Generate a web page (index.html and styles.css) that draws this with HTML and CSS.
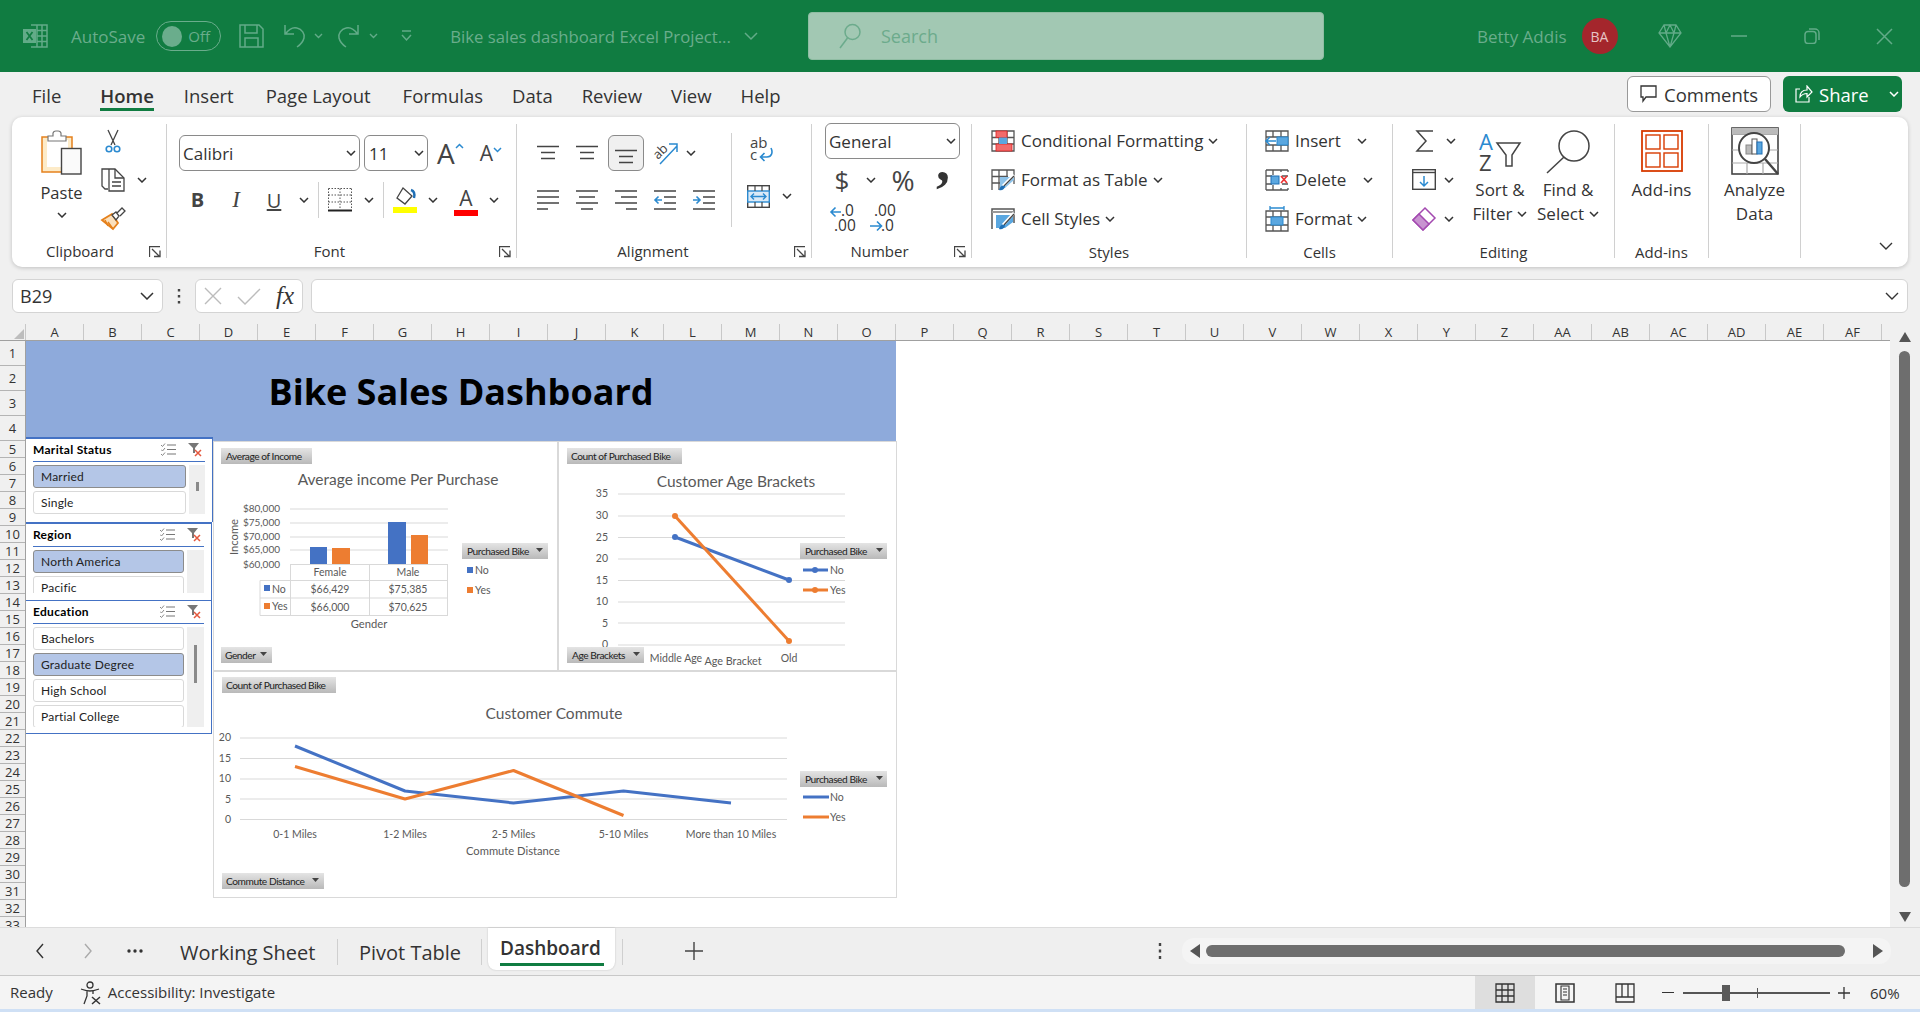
FILE: index.html

```html
<!DOCTYPE html>
<html lang="en">
<head>
    <meta charset="UTF-8">
    <title>Bike sales dashboard Excel Project</title>
    <link rel="stylesheet" href="styles.css">
</head>
<body>
    <svg class="defs" width="0" height="0">
        <defs>
            <linearGradient id="pvt" x1="0" y1="0" x2="0" y2="1">
                <stop offset="0" stop-color="#e4e4e4"/>
                <stop offset="1" stop-color="#b9b9b9"/>
            </linearGradient>
            <symbol id="chev" viewBox="0 0 10 6"><path d="M1 1l4 4 4-4" fill="none" stroke="#333" stroke-width="1.5"/></symbol>
            <symbol id="launcher" viewBox="0 0 12 12"><path d="M.5 11V.5H11M3 3l7 7M5 10.5h6v-6" fill="none" stroke="#444" stroke-width="1.3"/></symbol>
            <symbol id="al-top" viewBox="0 0 22 16"><path d="M0 1.5h22M4 7.5h14M4 13.500h14" fill="none" stroke="#444" stroke-width="1.500"/></symbol>
            <symbol id="al-left" viewBox="0 0 22 20"><path d="M0 1h22M0 7h22M0 13h22M0 19h11" fill="none" stroke="#444" stroke-width="1.500"/></symbol>
            <symbol id="al-center" viewBox="0 0 22 20"><path d="M0 1h22M3 7h16M0 13h22M5 19h12" fill="none" stroke="#444" stroke-width="1.500"/></symbol>
            <symbol id="al-right" viewBox="0 0 22 20"><path d="M0 1h22M6 7h16M0 13h22M11 19h11" fill="none" stroke="#444" stroke-width="1.500"/></symbol>
        </defs>
    </svg>

    <header class="titlebar">
        <div class="tb-left">
            <svg class="xl-logo" width="25" height="24" viewBox="0 0 25 24">
                <path d="M8 1h16v22H8M14 1v22M19 1v22M14 6.500h10M14 12h10M14 17.500h10" fill="none" stroke="#62ab88" stroke-width="1.500"/>
                <rect x="0" y="5" width="13" height="14" fill="#62ab88"/>
                <path d="M3.500 8l6 8M9.500 8l-6 8" stroke="#107c41" stroke-width="1.700"/>
            </svg>
            <span class="tb-text autosave">AutoSave</span>
            <span class="toggle"><i class="knob"></i>Off</span>
            <svg class="tb-save" width="25" height="24" viewBox="0 0 25 24"><path d="M1 1h19l4 4v18H1zM6 1v8h12V1M6 23v-9h13v9" fill="none" stroke="#62ab88" stroke-width="1.500"/></svg>
            <svg class="tb-undo" width="23" height="24" viewBox="0 0 23 24"><path d="M1 1v9h9M1.500 10C5 5 9 3 13 4c5 1 8 6 7 10s-4 7-7 9" fill="none" stroke="#62ab88" stroke-width="1.500"/></svg>
            <svg class="tb-chev" width="9" height="6"><path d="M1 1l3.500 3.500L8 1" fill="none" stroke="#62ab88" stroke-width="1.400"/></svg>
            <svg class="tb-redo" width="23" height="24" viewBox="0 0 23 24"><path d="M22 1v9h-9M21.500 10C18 5 14 3 10 4 5 5 2 10 3 14s4 7 7 9" fill="none" stroke="#62ab88" stroke-width="1.500"/></svg>
            <svg class="tb-chev tb-chev2" width="9" height="6"><path d="M1 1l3.500 3.500L8 1" fill="none" stroke="#62ab88" stroke-width="1.400"/></svg>
            <svg class="tb-custom" width="11" height="12" viewBox="0 0 11 12"><path d="M1 1h9M1 5l4.500 5L10 5" fill="none" stroke="#62ab88" stroke-width="1.500"/></svg>
            <span class="tb-text doc-name">Bike sales dashboard Excel Project...</span>
            <svg class="tb-docchev" width="14" height="9" viewBox="0 0 14 9"><path d="M1 1l6 6 6-6" fill="none" stroke="#62ab88" stroke-width="1.500"/></svg>
        </div>
        <div class="search">
            <svg width="24" height="26" viewBox="0 0 24 26"><circle cx="14.500" cy="9" r="7.500" fill="none" stroke="#6cab8c" stroke-width="1.500"/><path d="M9.500 15L2 25" stroke="#6cab8c" stroke-width="1.500"/></svg>
            <span class="search-text">Search</span>
        </div>
        <div class="tb-right">
            <span class="tb-text">Betty Addis</span>
            <span class="avatar">BA</span>
            <svg class="tb-gem" width="24" height="24" viewBox="0 0 24 24"><path d="M6 1h12l5 8-11 14L1 9zM1 9h22M8 9l4 14 4-14M6 1l2 8 4-8 4 8 2-8" fill="none" stroke="#62ab88" stroke-width="1.300"/></svg>
            <svg class="tb-min" width="16" height="2"><path d="M0 1h16" stroke="#62ab88" stroke-width="1.500"/></svg>
            <svg class="tb-rest" width="16" height="16" viewBox="0 0 16 16"><path d="M5 1h6a4 4 0 014 4v7" fill="none" stroke="#62ab88" stroke-width="1.500"/><rect x="1" y="3.500" width="11" height="12" rx="3" fill="none" stroke="#62ab88" stroke-width="1.500"/></svg>
            <svg class="tb-close" width="17" height="17" viewBox="0 0 17 17"><path d="M1 1l15 15M16 1L1 16" stroke="#62ab88" stroke-width="1.500"/></svg>
        </div>
    </header>

    <nav class="menu">
        <ul class="menu-tabs">
            <li class="first">File</li>
            <li class="active">Home</li>
            <li class="wide">Insert</li>
            <li class="wide">Page Layout</li>
            <li>Formulas</li>
            <li>Data</li>
            <li>Review</li>
            <li>View</li>
            <li>Help</li>
        </ul>
        <button class="comments">
            <svg width="17" height="18" viewBox="0 0 17 18"><path d="M1 1h15v11H6l-3 4v-4H1z" fill="none" stroke="#333" stroke-width="1.300"/></svg>
            Comments
        </button>
        <button class="share">
            <svg width="18" height="18" viewBox="0 0 18 18"><path d="M5 4H1v13h13v-5M5 12c0-5 3-7 7-7V1l5 6-5 5V8.500c-3 0-5 1-7 3.500z" fill="none" stroke="#fff" stroke-width="1.200"/></svg>
            Share
            <svg class="share-chev" width="10" height="6"><path d="M1 1l4 4 4-4" fill="none" stroke="#fff" stroke-width="1.500"/></svg>
        </button>
    </nav>

    <section class="ribbon">
        <div class="group g-clip">
            <div class="group-body clip-body">
                <div class="paste">
                    <svg width="41" height="45" viewBox="0 0 41 45">
                        <path d="M1 7h30v35H1z" fill="#fdebc8" stroke="#e5811c" stroke-width="1.500"/>
                        <path d="M6 10h21v27H6z" fill="#fff"/>
                        <path d="M7 11V6h5V3a3 3 0 013-2h2a3 3 0 013 2v3h5v5z" fill="#fff" stroke="#777" stroke-width="1.200"/>
                        <rect x="20.500" y="18.500" width="19.500" height="25.500" fill="#fafafa" stroke="#444" stroke-width="1.400"/>
                    </svg>
                    <span class="paste-label">Paste</span>
                    <svg class="chev" width="10" height="6"><use href="#chev"/></svg>
                </div>
                <div class="stack">
                    <div class="stack-row">
                        <svg width="16" height="24" viewBox="0 0 16 24"><path d="M3 1l7 15M13 1L6 16" stroke="#444" stroke-width="1.300" fill="none"/><circle cx="4" cy="20" r="2.800" fill="none" stroke="#2b8ad0" stroke-width="1.600"/><circle cx="12" cy="20" r="2.800" fill="none" stroke="#2b8ad0" stroke-width="1.600"/></svg>
                    </div>
                    <div class="stack-row">
                        <svg width="24" height="24" viewBox="0 0 24 24"><path d="M8 1H1v17l3 3h3M8 1h6l9 9v13H8z" fill="#fff" stroke="#444" stroke-width="1.300"/><path d="M14 1v9h9M11 14h9M11 18h9" fill="none" stroke="#444" stroke-width="1.300"/></svg>
                        <svg class="chev-copy" width="10" height="6"><use href="#chev"/></svg>
                    </div>
                    <div class="stack-row">
                        <svg width="25" height="23" viewBox="0 0 25 23"><path d="M1 13l10-6 6 9-5 6z" fill="#fbe0bc" stroke="#e5811c" stroke-width="1.800"/><path d="M7 15l5 7M4 13l3 6" stroke="#e5811c" stroke-width="1.500"/><path d="M11 8l4-3 3 4-3 4zM16 6l5-5 3 3-5 5" fill="#fff" stroke="#444" stroke-width="1.300"/></svg>
                    </div>
                </div>
            </div>
            <div class="group-label">Clipboard<svg class="launcher" width="12" height="12"><use href="#launcher"/></svg></div>
        </div>

        <div class="group g-font">
            <div class="group-body">
                <div class="r-row r1">
                    <span class="select sel-font">Calibri<svg width="10" height="6"><use href="#chev"/></svg></span>
                    <span class="select sel-size">11<svg width="10" height="6"><use href="#chev"/></svg></span>
                    <span class="grow-a">A<svg width="9" height="6"><path d="M1 5l3.500-3.500L8 5" fill="none" stroke="#2b8ad0" stroke-width="1.500"/></svg></span>
                    <span class="shrink-a">A<svg width="9" height="6"><path d="M1 1l3.500 3.500L8 1" fill="none" stroke="#2b8ad0" stroke-width="1.500"/></svg></span>
                </div>
                <div class="r-row r2">
                    <span class="cell w37 t-b">B</span>
                    <span class="cell w40 t-i">I</span>
                    <span class="cell w36 t-u">U</span>
                    <span class="cell w23"><svg width="10" height="6"><use href="#chev"/></svg></span>
                    <i class="vsep"></i>
                    <span class="cell w35">
                        <svg width="24" height="24" viewBox="0 0 24 24"><path d="M.5.500h23M.5.500v20M23.500.500v20M.5 7h23M.5 14h23M12 .5v20" fill="none" stroke="#555" stroke-width="1" stroke-dasharray="1.500 1.500"/><path d="M0 22.500h24" stroke="#222" stroke-width="2"/></svg>
                    </span>
                    <span class="cell w23"><svg width="10" height="6"><use href="#chev"/></svg></span>
                    <i class="vsep"></i>
                    <span class="cell w36">
                        <svg width="24" height="26" viewBox="0 0 24 26"><path d="M10 1l9 8-7 8-8-6z" fill="#fff" stroke="#444" stroke-width="1.300"/><path d="M18 3c3 1 4 4 3 8" fill="none" stroke="#1f6fb5" stroke-width="2.400"/><rect y="20" width="24" height="6" fill="#ffff00"/></svg>
                    </span>
                    <span class="cell w20"><svg width="10" height="6"><use href="#chev"/></svg></span>
                    <span class="cell w46 color-a">A<i class="color-bar"></i></span>
                    <span class="cell w10"><svg width="10" height="6"><use href="#chev"/></svg></span>
                </div>
            </div>
            <div class="group-label">Font<svg class="launcher" width="12" height="12"><use href="#launcher"/></svg></div>
        </div>

        <div class="group g-align">
            <div class="group-body align-body">
                <div class="align-left">
                    <div class="r-row r1">
                        <span class="cell w39"><svg width="22" height="16"><use href="#al-top"/></svg></span>
                        <span class="cell w39"><svg width="22" height="16"><use href="#al-top"/></svg></span>
                        <span class="cell w39"><span class="pressed"><svg width="22" height="16"><use href="#al-top"/></svg></span></span>
                        <span class="cell w39">
                            <svg width="26" height="24" viewBox="0 0 26 24">
                                <text class="ic-small" transform="translate(6 19) rotate(-45)" x="0" y="0">ab</text>
                                <path d="M8 23L25 5M17 3h8v8" fill="none" stroke="#2b8ad0" stroke-width="1.500"/>
                            </svg>
                        </span>
                        <span class="cell w14"><svg width="10" height="6"><use href="#chev"/></svg></span>
                    </div>
                    <div class="r-row r2">
                        <span class="cell w39"><svg width="22" height="20"><use href="#al-left"/></svg></span>
                        <span class="cell w39"><svg width="22" height="20"><use href="#al-center"/></svg></span>
                        <span class="cell w39"><svg width="22" height="20"><use href="#al-right"/></svg></span>
                        <span class="cell w39">
                            <svg width="22" height="20" viewBox="0 0 22 20"><path d="M0 1h22M10 7h12M10 13h12M0 19h22" fill="none" stroke="#444" stroke-width="1.500"/><path d="M8 10H1M4.500 6.500L1 10l3.500 3.500" fill="none" stroke="#2b8ad0" stroke-width="1.600"/></svg>
                        </span>
                        <span class="cell w39">
                            <svg width="22" height="20" viewBox="0 0 22 20"><path d="M0 1h22M10 7h12M10 13h12M0 19h22" fill="none" stroke="#444" stroke-width="1.500"/><path d="M0 10h7M3.500 6.500L7 10l-3.500 3.500" fill="none" stroke="#2b8ad0" stroke-width="1.600"/></svg>
                        </span>
                    </div>
                </div>
                <i class="vsep tall-sep"></i>
                <div class="align-right">
                    <svg class="wrap-ic" width="24" height="26" viewBox="0 0 24 26">
                        <text class="ic-text" x="0" y="11">ab</text>
                        <text class="ic-text" x="0" y="23">c</text>
                        <path d="M21 11c2 4 1 9-4 9h-6M14.500 16l-4 4 4 4" fill="none" stroke="#2b8ad0" stroke-width="1.600"/>
                    </svg>
                    <div class="merge-row">
                        <svg width="23" height="23" viewBox="0 0 23 23"><rect x=".7" y=".7" width="21.600" height="21.600" fill="#fff" stroke="#444" stroke-width="1.400"/><rect x=".7" y="6" width="21.600" height="11" fill="#dbeaf7" stroke="#2b8ad0" stroke-width="1.400"/><path d="M8 .7V6M15 .7V6M8 17v5M15 17v5" stroke="#444" stroke-width="1.200"/><path d="M4 11.500h15M7 8.500l-3 3 3 3M16 8.500l3 3-3 3" fill="none" stroke="#2b8ad0" stroke-width="1.400"/></svg>
                        <span class="cell w34"><svg width="10" height="6"><use href="#chev"/></svg></span>
                    </div>
                </div>
            </div>
            <div class="group-label lbl-align">Alignment<svg class="launcher" width="12" height="12"><use href="#launcher"/></svg></div>
        </div>

        <div class="group g-num">
            <div class="group-body num-body">
                <span class="select sel-num">General<svg width="10" height="6"><use href="#chev"/></svg></span>
                <div class="r-row num-row">
                    <span class="cell w24 t-sym">$</span>
                    <span class="cell w34"><svg width="10" height="6"><use href="#chev"/></svg></span>
                    <span class="cell w30 t-pct">%</span>
                    <span class="cell w10"></span>
                    <span class="cell w30 t-comma">,</span>
                </div>
                <div class="r-row dec-row">
                    <svg width="26" height="28" viewBox="0 0 26 28">
                        <text class="ic-num" x="11" y="12">.0</text>
                        <text class="ic-num" x="4" y="27">.00</text>
                        <path d="M11 8H1M5.500 3.500L1 8l4.500 4.500" fill="none" stroke="#2b8ad0" stroke-width="1.600"/>
                    </svg>
                    <svg class="dec2" width="26" height="28" viewBox="0 0 26 28">
                        <text class="ic-num" x="4" y="12">.00</text>
                        <text class="ic-num" x="11" y="27">.0</text>
                        <path d="M0 22h11M7 17.500l4.500 4.500L7 26.500" fill="none" stroke="#2b8ad0" stroke-width="1.600"/>
                    </svg>
                </div>
            </div>
            <div class="group-label lbl-num">Number<svg class="launcher" width="12" height="12"><use href="#launcher"/></svg></div>
        </div>

        <div class="group g-styles">
            <div class="group-body">
                <div class="stack list">
                    <div class="stack-row">
                        <svg width="24" height="22" viewBox="0 0 24 22"><path d="M1 1h22v20H1zM1 7.500h22M1 14h22M8 1v20M16 1v20" fill="none" stroke="#555" stroke-width="1.300"/><rect x="5" y="1" width="11" height="6.500" fill="#f26b6b" stroke="#d22" stroke-width=".8"/><rect x="5" y="14" width="16" height="7" fill="#f26b6b" stroke="#d22" stroke-width=".8"/><rect x="8" y="7.500" width="8" height="6.500" fill="#5aa7e0"/></svg>
                        <span>Conditional Formatting</span><svg class="chev-r" width="10" height="6"><use href="#chev"/></svg>
                    </div>
                    <div class="stack-row">
                        <svg width="24" height="22" viewBox="0 0 24 22"><path d="M1 21V1h22v14M1 7.500h16M1 14h9M8 1v20M16 1v8" fill="none" stroke="#555" stroke-width="1.300"/><path d="M9 8h14v3l-9 8H9z" fill="#8ec3ea"/><path d="M23 6l-11 11" stroke="#fff" stroke-width="3"/><path d="M23 7l-10 10" stroke="#444" stroke-width="1.200"/><path d="M8 21c1-4 3-5 6-4 0 3-3 5-6 4z" fill="#1f6fb5"/></svg>
                        <span>Format as Table</span><svg class="chev-r" width="10" height="6"><use href="#chev"/></svg>
                    </div>
                    <div class="stack-row">
                        <svg width="24" height="22" viewBox="0 0 24 22"><path d="M1 21V1h22v14" fill="none" stroke="#555" stroke-width="1.500"/><path d="M1 4h22" stroke="#999" stroke-width="2"/><path d="M5 7h17v7l-8 6H5z" fill="#5aa7e0"/><path d="M23 5L12 17" stroke="#fff" stroke-width="3"/><path d="M23 6L13 17" stroke="#444" stroke-width="1.200"/><path d="M8 21c1-4 3-5 6-4 0 3-3 5-6 4z" fill="#1f6fb5"/></svg>
                        <span>Cell Styles</span><svg class="chev-r" width="10" height="6"><use href="#chev"/></svg>
                    </div>
                </div>
            </div>
            <div class="group-label">Styles</div>
        </div>

        <div class="group g-cells">
            <div class="group-body">
                <div class="stack list">
                    <div class="stack-row">
                        <svg width="24" height="22" viewBox="0 0 24 22"><path d="M1 1h22v20H1zM1 7h22M1 15h22M8 1v6M16 1v6M8 15v6M16 15v6" fill="none" stroke="#555" stroke-width="1.300"/><rect x="12" y="7" width="11" height="8" fill="#5aa7e0" stroke="#2b8ad0"/><path d="M11 11H1M5 7l-4 4 4 4" fill="none" stroke="#2b8ad0" stroke-width="1.500"/></svg>
                        <span class="cl-a">Insert</span><svg width="10" height="6"><use href="#chev"/></svg>
                    </div>
                    <div class="stack-row">
                        <svg width="24" height="22" viewBox="0 0 24 22"><path d="M1 1h22M1 21h22M1 7h6M1 15h6M17 7h6M17 15h6M8 1v5M16 1v2M8 16v5M16 19v2M1 1v20M23 1v2M23 19v2" fill="none" stroke="#555" stroke-width="1.300"/><rect x="6" y="7" width="8" height="8" fill="#5aa7e0" stroke="#1f6fb5"/><path d="M16 7l6 7M22 7l-6 7" stroke="#e33" stroke-width="1.700"/></svg>
                        <span class="cl-b">Delete</span><svg width="10" height="6"><use href="#chev"/></svg>
                    </div>
                    <div class="stack-row">
                        <svg width="24" height="26" viewBox="0 0 24 26"><path d="M1 5h22v20H1zM1 11h22M1 19h22M8 5v20M16 5v20" fill="none" stroke="#555" stroke-width="1.300"/><rect x="6" y="11" width="12" height="8" fill="#5aa7e0" stroke="#2b8ad0"/><path d="M5 0v4M19 0v4M5 2h14" stroke="#2b8ad0" stroke-width="1.300"/></svg>
                        <span class="cl-a">Format</span><svg width="10" height="6"><use href="#chev"/></svg>
                    </div>
                </div>
            </div>
            <div class="group-label">Cells</div>
        </div>

        <div class="group g-edit">
            <div class="group-body edit-body">
                <div class="stack edit-stack">
                    <div class="stack-row">
                        <svg class="sum-ic" width="18" height="22" viewBox="0 0 18 22"><path d="M17 1H1l9 10-9 10h16" fill="none" stroke="#444" stroke-width="1.500"/></svg>
                        <svg class="chev-sum" width="10" height="6"><use href="#chev"/></svg>
                    </div>
                    <div class="stack-row">
                        <svg width="24" height="21" viewBox="0 0 24 21"><rect x=".7" y=".7" width="22.600" height="19.600" fill="#fff" stroke="#444" stroke-width="1.400"/><path d="M0 3.500h24" stroke="#444" stroke-width="1.400"/><path d="M12 7v10M8 13l4 4 4-4" fill="none" stroke="#2b8ad0" stroke-width="1.500"/></svg>
                        <svg class="chev-e" width="10" height="6"><use href="#chev"/></svg>
                    </div>
                    <div class="stack-row">
                        <svg width="24" height="24" viewBox="0 0 24 24"><path d="M13 1l10 10-12 12L1 13z" fill="#fff" stroke="#a349b0" stroke-width="1.500"/><path d="M1 13l6-6 10 10-6 6z" fill="#c893d0" stroke="#a349b0" stroke-width="1.500"/></svg>
                        <svg class="chev-e" width="10" height="6"><use href="#chev"/></svg>
                    </div>
                </div>
                <div class="big sort">
                    <svg width="42" height="42" viewBox="0 0 42 42">
                        <text class="az-a" x="0" y="20">A</text>
                        <text class="az-z" x="0" y="41">Z</text>
                        <path d="M18 13h23L33 25v11h-6V25z" fill="#fff" stroke="#444" stroke-width="1.500"/>
                    </svg>
                    <span class="big-text">Sort &amp;</span>
                    <span class="big-text">Filter<svg width="10" height="6"><use href="#chev"/></svg></span>
                </div>
                <div class="big find">
                    <svg width="44" height="44" viewBox="0 0 44 44"><circle cx="28" cy="16" r="15" fill="#fff" stroke="#444" stroke-width="1.500"/><path d="M18 27L1 43" stroke="#444" stroke-width="1.500"/></svg>
                    <span class="big-text">Find &amp;</span>
                    <span class="big-text">Select<svg width="10" height="6"><use href="#chev"/></svg></span>
                </div>
            </div>
            <div class="group-label">Editing</div>
        </div>

        <div class="group g-addin">
            <div class="group-body center-body">
                <div class="big">
                    <svg width="42" height="42" viewBox="0 0 42 42">
                        <rect x="1" y="1" width="40" height="40" fill="#fff" stroke="#d83b01" stroke-width="1.800"/>
                        <rect x="5" y="5" width="14" height="14" fill="none" stroke="#d83b01" stroke-width="1.400"/>
                        <rect x="23" y="5" width="14" height="14" fill="none" stroke="#d83b01" stroke-width="1.400"/>
                        <rect x="5" y="23" width="14" height="14" fill="none" stroke="#d83b01" stroke-width="1.400"/>
                        <rect x="23" y="23" width="14" height="14" fill="none" stroke="#d83b01" stroke-width="1.400"/>
                    </svg>
                    <span class="big-text">Add-ins</span>
                </div>
            </div>
            <div class="group-label">Add-ins</div>
        </div>

        <div class="group g-analyze">
            <div class="group-body center-body">
                <div class="big analyze">
                    <svg width="48" height="48" viewBox="0 0 48 48">
                        <rect x="1" y="1" width="46" height="46" fill="#fff" stroke="#444" stroke-width="1.600"/>
                        <rect x="1" y="1" width="46" height="6" fill="#bbb"/>
                        <path d="M1 7.500h46M1 23h46M1 36h46M16 36v11M32 36v11" stroke="#aaa" stroke-width="1.200"/>
                        <circle cx="23" cy="21" r="15" fill="#fff" stroke="#444" stroke-width="2"/>
                        <path d="M34 32l13 15" stroke="#444" stroke-width="2.400"/>
                        <rect x="15" y="18" width="6" height="9" fill="#bbb" stroke="#888"/>
                        <rect x="21" y="12" width="5" height="15" fill="#fff" stroke="#555"/>
                        <rect x="26" y="15" width="5" height="12" fill="#5aa7e0" stroke="#1f6fb5"/>
                    </svg>
                    <span class="big-text">Analyze</span>
                    <span class="big-text">Data</span>
                </div>
            </div>
        </div>

        <div class="ribbon-end">
            <svg width="14" height="8" viewBox="0 0 14 8"><path d="M1 1l6 6 6-6" fill="none" stroke="#333" stroke-width="1.400"/></svg>
        </div>
    </section>

    <section class="formula-row">
        <div class="namebox">B29<svg width="14" height="8" viewBox="0 0 14 8"><path d="M1 1l6 6 6-6" fill="none" stroke="#333" stroke-width="1.500"/></svg></div>
        <svg class="fx-dots" width="4" height="16"><path d="M2 1v2.500M2 7v2.500M2 13v2.500" stroke="#444" stroke-width="2.400"/></svg>
        <div class="fx-box">
            <svg width="18" height="18" viewBox="0 0 18 18"><path d="M1 1l16 16M17 1L1 17" stroke="#bcbcbc" stroke-width="1.400"/></svg>
            <svg width="24" height="17" viewBox="0 0 24 17"><path d="M1 9l7 7L23 1" fill="none" stroke="#bcbcbc" stroke-width="1.400"/></svg>
            <span class="fx">fx</span>
        </div>
        <div class="formula-input"><svg width="14" height="8" viewBox="0 0 14 8"><path d="M1 1l6 6 6-6" fill="none" stroke="#333" stroke-width="1.400"/></svg></div>
    </section>

    <main class="sheet-area">
        <div class="sheet">
            <div class="col-heads">
                <div class="corner"><svg width="10" height="10" viewBox="0 0 10 10"><path d="M10 0v10H0z" fill="#bdbdbd"/></svg></div>
                <span>A</span><span>B</span><span>C</span><span>D</span><span>E</span><span>F</span><span>G</span><span>H</span>
                <span>I</span><span>J</span><span>K</span><span>L</span><span>M</span><span>N</span><span>O</span><span>P</span>
                <span>Q</span><span>R</span><span>S</span><span>T</span><span>U</span><span>V</span><span>W</span><span>X</span>
                <span>Y</span><span>Z</span><span>AA</span><span>AB</span><span>AC</span><span>AD</span><span>AE</span><span>AF</span>
            </div>
            <div class="sheet-body">
                <div class="row-heads">
                    <span class="tall">1</span><span class="tall">2</span><span class="tall">3</span><span class="tall">4</span>
                    <span>5</span><span>6</span><span>7</span><span>8</span><span>9</span><span>10</span><span>11</span><span>12</span>
                    <span>13</span><span>14</span><span>15</span><span>16</span><span>17</span><span>18</span><span>19</span><span>20</span>
                    <span>21</span><span>22</span><span>23</span><span>24</span><span>25</span><span>26</span><span>27</span><span>28</span>
                    <span>29</span><span>30</span><span>31</span><span>32</span><span>33</span>
                </div>
                <div class="canvas">
                    <div class="banner"><h1>Bike Sales Dashboard</h1></div>
                    <div class="dash">
                        <div class="slicers">
                            <div class="slicer s-marital">
                                <div class="slicer-head">
                                    <span>Marital Status</span>
                                    <svg class="ms-ic" width="15" height="13" viewBox="0 0 15 13"><path d="M6 2h9M6 6.500h9M6 11h9" stroke="#777" stroke-width="1.200"/><path d="M0 2l1.500 1.500L4 .5M0 6.500L1.500 8 4 5M0 11l1.500 1.500L4 9.500" fill="none" stroke="#888" stroke-width="1"/></svg>
                                    <svg class="fl-ic" width="14" height="14" viewBox="0 0 14 14"><path d="M0 0h11L7 5v5H5V5z" fill="#777"/><path d="M7 7l6 6M13 7l-6 6" stroke="#e4583e" stroke-width="1.500"/></svg>
                                </div>
                                <div class="slicer-list">
                                    <div class="items">
                                        <div class="item on">Married</div>
                                        <div class="item">Single</div>
                                    </div>
                                    <div class="sl-scroll"><i class="thumb th-marital"></i></div>
                                </div>
                            </div>
                            <div class="slicer s-region">
                                <div class="slicer-head">
                                    <span>Region</span>
                                    <svg class="ms-ic" width="15" height="13" viewBox="0 0 15 13"><path d="M6 2h9M6 6.500h9M6 11h9" stroke="#777" stroke-width="1.200"/><path d="M0 2l1.500 1.500L4 .5M0 6.500L1.500 8 4 5M0 11l1.500 1.500L4 9.500" fill="none" stroke="#888" stroke-width="1"/></svg>
                                    <svg class="fl-ic" width="14" height="14" viewBox="0 0 14 14"><path d="M0 0h11L7 5v5H5V5z" fill="#777"/><path d="M7 7l6 6M13 7l-6 6" stroke="#e4583e" stroke-width="1.500"/></svg>
                                </div>
                                <div class="slicer-list">
                                    <div class="items">
                                        <div class="item on">North America</div>
                                        <div class="item">Pacific</div>
                                    </div>
                                    <div class="sl-scroll"></div>
                                </div>
                            </div>
                            <div class="slicer s-edu">
                                <div class="slicer-head">
                                    <span>Education</span>
                                    <svg class="ms-ic" width="15" height="13" viewBox="0 0 15 13"><path d="M6 2h9M6 6.500h9M6 11h9" stroke="#777" stroke-width="1.200"/><path d="M0 2l1.500 1.500L4 .5M0 6.500L1.500 8 4 5M0 11l1.500 1.500L4 9.500" fill="none" stroke="#888" stroke-width="1"/></svg>
                                    <svg class="fl-ic" width="14" height="14" viewBox="0 0 14 14"><path d="M0 0h11L7 5v5H5V5z" fill="#777"/><path d="M7 7l6 6M13 7l-6 6" stroke="#e4583e" stroke-width="1.500"/></svg>
                                </div>
                                <div class="slicer-list">
                                    <div class="items">
                                        <div class="item">Bachelors</div>
                                        <div class="item on">Graduate Degree</div>
                                        <div class="item">High School</div>
                                        <div class="item">Partial College</div>
                                    </div>
                                    <div class="sl-scroll"><i class="thumb th-edu"></i></div>
                                </div>
                            </div>
                        </div>
                        <div class="charts">
                            <div class="chart-row">
                                <svg class="chart c-income" width="345" height="230" viewBox="213 441 345 230">
                                    <rect x="221" y="448" width="91" height="16" fill="url(#pvt)"/>
                                    <text class="t-pvt" x="226" y="460">Average of Income</text>
                                    <text class="t-title" x="398" y="485" text-anchor="middle">Average income Per Purchase</text>
                                    <path class="grid" d="M290 509h158M290 523h158M290 537h158M290 550h158"/>
                                    <g class="t-axis vals" text-anchor="end">
                                        <text x="280" y="512">$80,000</text>
                                        <text x="280" y="526">$75,000</text>
                                        <text x="280" y="540">$70,000</text>
                                        <text x="280" y="553">$65,000</text>
                                        <text x="280" y="568">$60,000</text>
                                    </g>
                                    <text class="t-axt" transform="translate(238 537) rotate(-90)" text-anchor="middle">Income</text>
                                    <rect x="310" y="547" width="17" height="17" fill="#4472c4"/>
                                    <rect x="332" y="548" width="18" height="16" fill="#ed7d31"/>
                                    <rect x="388" y="522" width="18" height="42" fill="#4472c4"/>
                                    <rect x="411" y="535" width="17" height="29" fill="#ed7d31"/>
                                    <path class="grid" d="M290 564.500h158M260 580.500h188M260 598h188M260 615.500h188M260 580.500v35M290.500 564.500v51M369.500 564.500v51M447.500 564.500v51"/>
                                    <g class="t-axis" text-anchor="middle">
                                        <text x="330" y="576">Female</text>
                                        <text x="408" y="576">Male</text>
                                        <text x="330" y="611">$66,000</text>
                                        <text x="408" y="611">$70,625</text>
                                        <text x="330" y="593">$66,429</text>
                                        <text x="408" y="593">$75,385</text>
                                    </g>
                                    <text class="t-axt" x="369" y="628" text-anchor="middle">Gender</text>
                                    <rect x="264" y="585" width="6" height="6" fill="#4472c4"/>
                                    <text class="t-axis" x="272" y="593">No</text>
                                    <rect x="264" y="603" width="6" height="6" fill="#ed7d31"/>
                                    <text class="t-axis" x="272" y="610">Yes</text>
                                    <rect x="462" y="543" width="86" height="16" fill="url(#pvt)"/>
                                    <text class="t-pvt" x="467" y="555">Purchased Bike</text>
                                    <path d="M536 548h7l-3.500 4z" fill="#444"/>
                                    <rect x="467" y="567" width="6" height="6" fill="#4472c4"/>
                                    <text class="t-axis" x="475" y="574">No</text>
                                    <rect x="467" y="587" width="6" height="6" fill="#ed7d31"/>
                                    <text class="t-axis" x="475" y="594">Yes</text>
                                    <rect x="221" y="647" width="51" height="16" fill="url(#pvt)"/>
                                    <text class="t-pvt" x="225" y="659">Gender</text>
                                    <path d="M260 652h7l-3.500 4z" fill="#444"/>
                                </svg>
                                <svg class="chart c-age" width="339" height="230" viewBox="558 441 339 230">
                                    <rect x="567" y="448" width="115" height="16" fill="url(#pvt)"/>
                                    <text class="t-pvt" x="571" y="460">Count of Purchased Bike</text>
                                    <text class="t-title" x="736" y="487" text-anchor="middle">Customer Age Brackets</text>
                                    <path class="grid" d="M618 494h227M618 516h227M618 537.500h227M618 559h227M618 580.500h227M618 602h227M618 623h227M618 645h227"/>
                                    <g class="t-axis" text-anchor="end">
                                        <text x="608" y="497">35</text>
                                        <text x="608" y="519">30</text>
                                        <text x="608" y="541">25</text>
                                        <text x="608" y="562">20</text>
                                        <text x="608" y="584">15</text>
                                        <text x="608" y="605">10</text>
                                        <text x="608" y="627">5</text>
                                        <text x="608" y="648">0</text>
                                    </g>
                                    <path class="ln-no" d="M675 537L789 580"/>
                                    <circle cx="675" cy="537" r="3" fill="#4472c4"/>
                                    <circle cx="789" cy="580" r="3" fill="#4472c4"/>
                                    <path class="ln-yes" d="M675 516L789 641"/>
                                    <circle cx="675" cy="516" r="3" fill="#ed7d31"/>
                                    <circle cx="789" cy="641" r="3" fill="#ed7d31"/>
                                    <rect x="800" y="543" width="87" height="16" fill="url(#pvt)"/>
                                    <text class="t-pvt" x="805" y="555">Purchased Bike</text>
                                    <path d="M876 548h7l-3.500 4z" fill="#444"/>
                                    <path class="ln-no" d="M803 570h25"/>
                                    <circle cx="815" cy="570" r="3" fill="#4472c4"/>
                                    <text class="t-axis" x="830" y="574">No</text>
                                    <path class="ln-yes" d="M803 590h25"/>
                                    <circle cx="815" cy="590" r="3" fill="#ed7d31"/>
                                    <text class="t-axis" x="830" y="594">Yes</text>
                                    <rect x="567" y="647" width="77" height="16" fill="url(#pvt)"/>
                                    <text class="t-pvt" x="572" y="659">Age Brackets</text>
                                    <path d="M633 652h7l-3.500 4z" fill="#444"/>
                                    <text class="t-axis" x="676" y="662" text-anchor="middle">Middle Age</text>
                                    <text class="t-axb" x="733" y="665" text-anchor="middle">Age Bracket</text>
                                    <text class="t-axis" x="789" y="662" text-anchor="middle">Old</text>
                                </svg>
                            </div>
                            <svg class="chart c-commute" width="684" height="227" viewBox="213 671 684 227">
                                <rect x="222" y="677" width="114" height="16" fill="url(#pvt)"/>
                                <text class="t-pvt" x="226" y="689">Count of Purchased Bike</text>
                                <text class="t-title" x="554" y="719" text-anchor="middle">Customer Commute</text>
                                <path class="grid" d="M240 738h547M240 758.500h547M240 779h547M240 799h547M240 819.500h547"/>
                                <g class="t-axis" text-anchor="end">
                                    <text x="231" y="741">20</text>
                                    <text x="231" y="762">15</text>
                                    <text x="231" y="782">10</text>
                                    <text x="231" y="803">5</text>
                                    <text x="231" y="823">0</text>
                                </g>
                                <path class="ln-no" d="M295 746L405 791 513.500 803 623.500 791 731 803"/>
                                <path class="ln-yes" d="M295 766.500L405 799 513.500 770.500 623.500 815.500"/>
                                <g class="t-axis" text-anchor="middle">
                                    <text x="295" y="838">0-1 Miles</text>
                                    <text x="405" y="838">1-2 Miles</text>
                                    <text x="513.500" y="838">2-5 Miles</text>
                                    <text x="623.500" y="838">5-10 Miles</text>
                                    <text x="731" y="838">More than 10 Miles</text>
                                </g>
                                <text class="t-axt" x="513" y="855" text-anchor="middle">Commute Distance</text>
                                <rect x="800" y="771" width="87" height="16" fill="url(#pvt)"/>
                                <text class="t-pvt" x="805" y="783">Purchased Bike</text>
                                <path d="M876 776h7l-3.500 4z" fill="#444"/>
                                <path class="ln-no" d="M803 797h26"/>
                                <text class="t-axis" x="830" y="801">No</text>
                                <path class="ln-yes" d="M803 817h26"/>
                                <text class="t-axis" x="830" y="821">Yes</text>
                                <rect x="222" y="873" width="102" height="16" fill="url(#pvt)"/>
                                <text class="t-pvt" x="226" y="885">Commute Distance</text>
                                <path d="M312 878h7l-3.500 4z" fill="#444"/>
                            </svg>
                        </div>
                    </div>
                </div>
            </div>
        </div>
        <aside class="vscroll">
            <svg width="12" height="10"><path d="M6 0l6 10H0z" fill="#555"/></svg>
            <i class="v-thumb"></i>
            <svg class="v-down" width="12" height="10"><path d="M6 10l6-10H0z" fill="#555"/></svg>
        </aside>
    </main>

    <footer class="tabs-bar">
        <svg class="nav-prev" width="10" height="16" viewBox="0 0 10 16"><path d="M8 1L2 8l6 7" fill="none" stroke="#333" stroke-width="1.400"/></svg>
        <svg class="nav-next" width="10" height="16" viewBox="0 0 10 16"><path d="M2 1l6 7-6 7" fill="none" stroke="#aaa" stroke-width="1.400"/></svg>
        <svg class="nav-dots" width="16" height="4"><path d="M2 2h.01M8 2h.01M14 2h.01" stroke="#333" stroke-width="3.400" stroke-linecap="round"/></svg>
        <span class="tab t1">Working Sheet</span>
        <i class="tab-sep"></i>
        <span class="tab t2">Pivot Table</span>
        <i class="tab-sep"></i>
        <span class="tab active">Dashboard</span>
        <i class="tab-sep t3"></i>
        <svg class="add-tab" width="18" height="18" viewBox="0 0 18 18"><path d="M9 0v18M0 9h18" stroke="#444" stroke-width="1.400"/></svg>
        <svg class="tabs-dots" width="4" height="16"><path d="M2 0v3M2 6.500v3M2 13v3" stroke="#444" stroke-width="2.400"/></svg>
        <div class="hscroll">
            <svg width="10" height="14"><path d="M10 0v14L0 7z" fill="#555"/></svg>
            <i class="h-thumb"></i>
            <svg width="10" height="14"><path d="M0 0v14l10-7z" fill="#555"/></svg>
        </div>
    </footer>

    <div class="status">
        <span class="st-ready">Ready</span>
        <svg class="st-acc" width="22" height="24" viewBox="0 0 22 24"><circle cx="10" cy="4" r="3" fill="none" stroke="#333" stroke-width="1.300"/><path d="M1 8c3 1 5 2 9 2s6-1 9-2M7 10v5l-3 8M13 10v3" fill="none" stroke="#333" stroke-width="1.300"/><path d="M12 16l8 7M20 16l-8 7" stroke="#333" stroke-width="1.500"/></svg>
        <span class="st-acc-text">Accessibility: Investigate</span>
        <div class="st-right">
            <span class="view-btn on"><svg width="20" height="20" viewBox="0 0 20 20"><path d="M1 1h18v18H1zM1 7h18M1 13h18M7 1v18M13 1v18" fill="none" stroke="#333" stroke-width="1.300"/></svg></span>
            <span class="view-btn"><svg width="20" height="20" viewBox="0 0 20 20"><path d="M1 1h18v18H1z" fill="none" stroke="#333" stroke-width="1.500"/><path d="M6 3h8v14H6zM8 6h4M8 9h4M8 12h4" fill="none" stroke="#333" stroke-width="1.100"/></svg></span>
            <span class="view-btn"><svg width="20" height="20" viewBox="0 0 20 20"><path d="M1 1h18v18H1zM1 14h18M7 1v13M13 1v13" fill="none" stroke="#333" stroke-width="1.300"/></svg></span>
            <span class="zoom-minus"></span>
            <div class="zoom-slider"><i class="z-tick"></i><i class="z-thumb"></i></div>
            <svg class="zoom-plus" width="12" height="12" viewBox="0 0 12 12"><path d="M6 0v12M0 6h12" stroke="#333" stroke-width="1.300"/></svg>
            <span class="zoom-val">60%</span>
        </div>
    </div>
</body>
</html>
```

FILE: styles.css

```css
* {
    box-sizing: border-box;
}

html, body {
    margin: 0;
    height: 1012px;
    overflow: hidden;
}

body {
    font-family: 'Open Sans', 'Noto Sans', sans-serif;
    background-color: #f0f0f0;
    color: #333;
    display: flex;
    flex-direction: column;
    border-bottom: 3px solid #cfe0f5;
}

i {
    display: block;
    font-style: normal;
}

.defs {
    position: absolute;
}

/* title bar */
.titlebar {
    height: 72px;
    flex: none;
    background-color: #107c41;
    display: flex;
    align-items: center;
}

.tb-left {
    flex: 0 0 808px;
    display: flex;
    align-items: center;
    padding-left: 23px;
}

.tb-text {
    color: #6aad8c;
    font-size: 17px;
    white-space: nowrap;
}

.autosave { margin-left: 23px; }

.toggle {
    margin-left: 11px;
    width: 65px;
    height: 30px;
    border: 1.5px solid #6aad8c;
    border-radius: 15px;
    color: #6aad8c;
    font-size: 15px;
    display: flex;
    align-items: center;
    padding-left: 5px;
    gap: 6px;
}

.knob {
    width: 20px;
    height: 21px;
    border-radius: 50%;
    background-color: #6aad8c;
}

.tb-save { margin-left: 18px; }
.tb-undo { margin-left: 20px; }
.tb-chev { margin-left: 7px; }
.tb-redo { margin-left: 13px; }
.tb-chev2 { margin-left: 10px; }
.tb-custom { margin-left: 23px; }
.doc-name { margin-left: 38px; width: 285px; font-size: 16.700px; }
.tb-docchev { margin-left: 9px; }

.search {
    width: 516px;
    height: 48px;
    background-color: #a2c8b3;
    border-radius: 4px;
    border: 1px solid #8fbda3;
    display: flex;
    align-items: center;
    padding-left: 29px;
    gap: 19px;
}

.search-text {
    color: #6cab8c;
    font-size: 18px;
}

.tb-right {
    flex: 1;
    display: flex;
    align-items: center;
    padding-left: 153px;
}

.avatar {
    margin-left: 15px;
    width: 36px;
    height: 36px;
    border-radius: 50%;
    background-color: #a4262c;
    color: #e6c4c6;
    font-size: 14px;
    display: flex;
    align-items: center;
    justify-content: center;
}

.tb-gem { margin-left: 40px; }
.tb-min { margin-left: 49px; }
.tb-rest { margin-left: 57px; }
.tb-close { margin-left: 56px; }

/* menu tabs */
.menu {
    height: 45px;
    flex: none;
    display: flex;
    align-items: flex-start;
    padding: 4px 18px 0 32px;
}

.menu-tabs {
    list-style: none;
    margin: 0;
    padding: 0;
    display: flex;
    gap: 29px;
    flex: 1;
}

.menu-tabs li {
    font-size: 18.500px;
    line-height: 40px;
    height: 35px;
    color: #333;
}

.menu-tabs .first {
    margin-right: 10px;
}

.menu-tabs .wide {
    margin-right: 3px;
}

.menu-tabs .active {
    font-weight: 600;
    margin-right: 1px;
    border-bottom: 3px solid #107c41;
}

.comments, .share {
    font-family: inherit;
    font-size: 18.500px;
    height: 36px;
    border-radius: 6px;
    display: flex;
    align-items: center;
    padding: 0;
}

.comments {
    width: 144px;
    background-color: #fff;
    border: 1px solid #999;
    color: #333;
    padding-left: 12px;
    gap: 7px;
}

.share {
    margin-left: 12px;
    width: 119px;
    background-color: #107c41;
    border: none;
    color: #fff;
    padding-left: 12px;
    gap: 6px;
}

.share-chev { margin-left: 14px; }

/* ribbon */
.ribbon {
    height: 150px;
    flex: none;
    margin: 0 12px;
    background-color: #fff;
    border-radius: 10px;
    box-shadow: 0 1px 4px rgba(0, 0, 0, 0.2);
    display: flex;
    padding-top: 7px;
    padding-bottom: 9px;
}

.ribbon svg {
    overflow: visible;
}

.group {
    height: 134px;
    border-right: 1px solid #d0d0d0;
    display: flex;
    flex-direction: column;
    flex: none;
}

.g-clip { width: 155px; }
.g-font { width: 350px; }
.g-align { width: 295px; }
.g-num { width: 160px; }
.g-styles { width: 275px; }
.g-cells { width: 146px; }
.g-edit { width: 222px; }
.g-addin { width: 94px; }
.g-analyze { width: 92px; }

.group-body {
    flex: 1;
    min-height: 0;
}

.group-label {
    height: 12px;
    line-height: 12px;
    text-align: center;
    font-size: 15px;
    color: #333;
    position: relative;
}

.g-clip .group-label, .g-font .group-label, .lbl-align, .lbl-num {
    line-height: 10px;
}

.launcher {
    position: absolute;
    right: 5px;
    top: 0;
}

.g-clip .group-label { padding-right: 18px; }
.g-font .group-label { padding-right: 24px; }
.lbl-align { padding-right: 22px; }
.lbl-num { padding-right: 24px; }

.clip-body {
    display: flex;
}

.paste {
    width: 89px;
    padding: 6px 0 0 10px;
    display: flex;
    flex-direction: column;
    align-items: center;
}

.paste-label {
    font-size: 16.500px;
    line-height: 20px;
    margin-top: 8px;
}

.chev { margin-top: 9px; }

.stack {
    margin-top: -3px;
}

.stack-row {
    height: 39px;
    display: flex;
    align-items: center;
    font-size: 17px;
    white-space: nowrap;
    position: relative;
}

.clip-body .stack {
    width: 24px;
}

.clip-body .stack-row {
    justify-content: center;
}

.chev-copy {
    position: absolute;
    left: 36px;
}

.list {
    padding-left: 19px;
}

.list .stack-row svg:first-child {
    margin-right: 6px;
}

.chev-r { margin-left: 5px; }
.cl-a { width: 62px; }
.cl-b { width: 68px; }

.g-cells .list { padding-left: 18px; }

.r-row {
    display: flex;
    align-items: center;
}

.r1 {
    height: 36px;
    margin-top: 11px;
}

.r2 {
    height: 36px;
    margin-top: 11px;
}

.g-font .r-row {
    padding-left: 12px;
}

.cell {
    flex: none;
    display: flex;
    align-items: center;
    justify-content: center;
    height: 36px;
}

.w10 { width: 10px; }
.w14 { width: 14px; }
.w20 { width: 20px; }
.w23 { width: 23px; }
.w24 { width: 24px; }
.w30 { width: 30px; }
.w34 { width: 34px; }
.w35 { width: 35px; }
.w36 { width: 36px; }
.w37 { width: 37px; }
.w39 { width: 39px; }
.w40 { width: 40px; }
.w46 { width: 46px; }

.select {
    height: 36px;
    border: 1px solid #8a8a8a;
    border-radius: 6px;
    font-size: 17px;
    color: #333;
    display: flex;
    align-items: center;
    justify-content: space-between;
    padding: 0 3px 0 3px;
    flex: none;
}

.sel-font { width: 181px; }
.sel-size { width: 64px; margin-left: 4px; padding-left: 4px; }

.grow-a, .shrink-a {
    position: relative;
    display: flex;
    color: #444;
    line-height: 1;
}

.grow-a {
    margin-left: 9px;
    font-size: 28px;
}

.shrink-a {
    margin-left: 16px;
    font-size: 21px;
}

.grow-a svg, .shrink-a svg { margin-top: 4px; }

.t-b { font-size: 20px; font-weight: 700; color: #444; padding-bottom: 2px; }
.t-i { font-family: 'Liberation Serif', serif; font-size: 23px; font-style: italic; color: #444; }
.t-u { font-size: 20px; text-decoration: underline; color: #444; }

.vsep {
    width: 1px;
    height: 36px;
    background-color: #d0d0d0;
    margin: 0 3px;
    flex: none;
}

.color-a {
    position: relative;
    font-size: 21px;
    color: #444;
    padding-bottom: 5px;
}

.color-bar {
    position: absolute;
    left: 11px;
    bottom: 2px;
    width: 24px;
    height: 6px;
    background-color: #ff0000;
}

.align-body {
    display: flex;
}

.align-left {
    width: 214px;
}

.align-left .r-row {
    padding-left: 11px;
}

.pressed {
    width: 36px;
    height: 36px;
    border: 1px solid #8a8a8a;
    border-radius: 6px;
    background-color: #f0f0f0;
    display: flex;
    align-items: center;
    justify-content: center;
    padding-top: 8px;
}

.tall-sep {
    height: 94px;
    margin: 9px 0 0 0;
}

.align-right {
    flex: 1;
    padding-top: 13px;
}

.wrap-ic { margin-left: 18px; display: block; }

.merge-row {
    display: flex;
    align-items: center;
    margin: 15px 0 0 15px;
}

.ic-text {
    font-size: 15px;
    fill: #444;
}

.ic-small {
    font-size: 13px;
    fill: #444;
}

.ic-num {
    font-size: 15.500px;
    fill: #333;
}

.num-body {
    padding-left: 13px;
}

.sel-num {
    width: 135px;
    margin-top: -1px;
}

.num-row {
    height: 30px;
    margin-top: 6px;
    margin-left: 5px;
}

.num-row .cell { height: 30px; }

.t-sym { font-size: 26px; color: #444; }
.t-pct { font-size: 28px; color: #444; }

.t-comma {
    font-family: 'Liberation Serif', serif;
    font-size: 56px;
    font-weight: 700;
    line-height: 1;
    color: #333;
    padding-bottom: 38px;
}

.dec-row {
    margin-top: 9px;
    margin-left: 5px;
}

.dec2 { margin-left: 14px; }

.edit-body {
    display: flex;
}

.edit-stack {
    width: 76px;
    padding-left: 19px;
    flex: none;
}

.sum-ic { margin-left: 4px; }
.chev-sum { margin-left: 12px; }
.chev-e { margin-left: 8px; }

.big {
    width: 62px;
    padding-top: 6px;
    display: flex;
    flex-direction: column;
    align-items: center;
    flex: none;
}

.big-text {
    font-size: 17px;
    line-height: 24px;
    white-space: nowrap;
}

.big > svg { margin-bottom: 6px; }
.big-text svg { margin-left: 5px; vertical-align: 3px; }

.find {
    margin-left: 6px;
}

.find > svg { margin-bottom: 4px; }

.az-a { font-size: 22px; fill: #2b8ad0; }
.az-z { font-size: 22px; fill: #444; }

.center-body {
    display: flex;
    justify-content: center;
}

.analyze {
    padding-top: 3px;
}

.analyze > svg { margin-bottom: 3px; }

.ribbon-end {
    flex: 1;
    display: flex;
    align-items: flex-end;
    justify-content: flex-end;
    padding: 0 15px 8px 0;
}

/* formula bar */
.formula-row {
    height: 57px;
    flex: none;
    padding: 12px 12px 0;
    display: flex;
    align-items: flex-start;
}

.namebox, .fx-box, .formula-input {
    height: 34px;
    background-color: #fff;
    border: 1px solid #d4d4d4;
    border-radius: 6px;
    display: flex;
    align-items: center;
}

.namebox {
    width: 151px;
    padding: 0 8px;
    font-size: 18px;
    justify-content: space-between;
}

.namebox, .formula-input { padding-left: 7px; }

.fx-dots {
    margin: 9px 14px 0;
}

.fx-box {
    width: 108px;
    padding-left: 8px;
    gap: 15px;
}

.fx {
    font-family: 'Liberation Serif', serif;
    font-style: italic;
    font-size: 25px;
    color: #333;
}

.formula-input {
    flex: 1;
    margin-left: 8px;
    justify-content: flex-end;
    padding-right: 8px;
}

/* sheet */
.sheet-area {
    height: 603px;
    flex: none;
    display: flex;
}

.sheet {
    flex: 1;
    min-width: 0;
    overflow: hidden;
}

.col-heads {
    height: 17px;
    display: flex;
    border-bottom: 1px solid #a0a0a0;
    background-color: #f0f0f0;
}

.corner {
    width: 26px;
    padding: 5px 0 0 14px;
    border-right: 1px solid #c8c8c8;
    flex: none;
}

.corner svg { display: block; }

.col-heads span {
    width: 58px;
    flex: none;
    border-right: 1px solid #c8c8c8;
    text-align: center;
    font-size: 13px;
    line-height: 16px;
    color: #333;
}

.sheet-body {
    height: 586px;
    display: flex;
    background-color: #fff;
    overflow: hidden;
}

.row-heads {
    width: 26px;
    flex: none;
    background-color: #f0f0f0;
    border-right: 1px solid #a0a0a0;
}

.row-heads span {
    display: block;
    height: 17px;
    line-height: 17px;
    font-size: 13px;
    text-align: center;
    color: #333;
    border-bottom: 1px solid #b4b4b4;
}

.row-heads .tall {
    height: 25px;
    line-height: 25px;
}

.canvas {
    flex: 1;
    min-width: 0;
}

.banner {
    width: 870px;
    height: 100px;
    background-color: #8eaadb;
    display: flex;
    align-items: center;
    justify-content: center;
}

.banner h1 {
    margin: 0;
    font-size: 36px;
    font-weight: 700;
    color: #000;
}

.dash {
    display: flex;
    width: 871px;
}

.slicers {
    width: 187px;
    flex: none;
    margin-top: -4px;
    position: relative;
}

.slicer {
    background-color: #fff;
    border: solid #4472c4;
    border-width: 2px 1.500px 0 0;
    padding: 0 7px 0 7px;
    overflow: hidden;
}

.s-marital { height: 85px; }
.s-region { height: 78px; margin-right: 1px; }
.s-edu { height: 134px; margin-right: 1px; border-bottom-width: 1.500px; border-top-width: 1.500px; }

.slicer-head {
    height: 23px;
    padding-bottom: 1px;
    display: flex;
    align-items: center;
    border-bottom: 1.500px solid #4472c4;
    font-size: 12px;
    font-weight: 700;
    font-family: Lato, sans-serif;
    letter-spacing: 0.3px;
    color: #000;
}

.slicer-head span { flex: 1; }
.ms-ic { margin-right: 12px; }
.fl-ic { margin-right: 3px; }

.slicer-list {
    display: flex;
    gap: 3px;
    margin-top: 3px;
}

.items {
    width: 153px;
    flex: none;
    display: flex;
    flex-direction: column;
    gap: 3px;
}

.s-region .items, .s-edu .items {
    width: 151px;
    overflow: hidden;
}

.s-region .items { height: 43px; }
.s-edu .items { height: 100px; }

.item {
    height: 23px;
    line-height: 21px;
    flex: none;
    border: 1px solid #d9d9d9;
    border-radius: 3px;
    padding-left: 7px;
    font-family: Lato, sans-serif;
    font-size: 12px;
    letter-spacing: 0.2px;
    color: #222;
    background-color: #fff;
}

.item.on {
    background-color: #b4c6e7;
    border-color: #8c8c8c;
}

.sl-scroll {
    flex: 1;
    height: 49px;
    background-color: #efefef;
    position: relative;
}

.s-region .sl-scroll { height: 43px; }
.s-edu .sl-scroll { height: 100px; }

.thumb {
    position: absolute;
    background-color: #8a8a8a;
    width: 3px;
}

.th-marital { left: 7px; top: 17px; height: 9px; }
.th-edu { left: 7px; top: 18px; height: 38px; }

.charts {
    width: 684px;
    flex: none;
}

.chart-row {
    display: flex;
    height: 230px;
}

.chart {
    display: block;
    flex: none;
    outline: 1px solid #d9d9d9;
    outline-offset: -1px;
    background-color: #fff;
}

.grid {
    stroke: #d9d9d9;
    stroke-width: 1;
    fill: none;
}

.t-title {
    font-family: Lato, sans-serif;
    font-size: 15.500px;
    fill: #595959;
}

.t-axis {
    font-family: Lato, sans-serif;
    font-size: 10.500px;
    fill: #595959;
}

.c-income .vals {
    font-size: 10px;
}

.t-axt {
    font-family: Lato, sans-serif;
    font-size: 11.200px;
    fill: #595959;
}

.t-axb {
    font-family: Lato, sans-serif;
    font-size: 10.800px;
    fill: #595959;
}

.t-pvt {
    font-family: Lato, sans-serif;
    font-size: 10.200px;
    letter-spacing: -0.45px;
    fill: #222;
}

.ln-no, .ln-yes {
    fill: none;
    stroke-width: 3;
    stroke-linejoin: round;
}

.ln-no { stroke: #4472c4; }
.ln-yes { stroke: #ed7d31; }

.vscroll {
    width: 30px;
    flex: none;
    background-color: #f0f0f0;
    display: flex;
    flex-direction: column;
    align-items: center;
    padding: 8px 1px 5px 0;
}

.v-thumb {
    width: 11px;
    height: 536px;
    margin-top: 9px;
    flex: none;
    background-color: #6e6e6e;
    border-radius: 6px;
}

.v-down { margin-top: auto; }

/* sheet tabs */
.tabs-bar {
    height: 48px;
    flex: none;
    border-top: 1px solid #dcdcdc;
    display: flex;
    align-items: center;
    background-color: #efefef;
}

.nav-prev { margin-left: 35px; margin-top: -2px; }
.nav-next { margin-left: 38px; margin-top: -2px; }
.nav-dots { margin-left: 34px; margin-top: -2px; }

.tab {
    font-size: 20px;
    color: #333;
    white-space: nowrap;
}

.t1 { margin-left: 37px; padding-top: 1px; width: 157px; }
.t2 { width: 122px; margin-left: 21px; padding-top: 1px; }

.tab-sep {
    width: 1px;
    height: 26px;
    background-color: #cfcfcf;
    flex: none;
}

.tab.active {
    align-self: flex-start;
    height: 42px;
    width: 127px;
    margin-left: 6px;
    background-color: #fff;
    border-radius: 0 0 8px 8px;
    box-shadow: 0 0 2px rgba(0, 0, 0, 0.2);
    font-weight: 600;
    font-size: 19px;
    padding: 6px 12px 0;
    line-height: 28px;
    background-image: linear-gradient(#107c41, #107c41);
    background-repeat: no-repeat;
    background-size: 104px 3px;
    background-position: 12px 35px;
}

.t3 { margin-left: 7px; }
.add-tab { margin-left: 62px; margin-top: -2px; }
.tabs-dots { margin-left: 455px; margin-top: -2px; }

.hscroll {
    margin-left: 20px;
    width: 709px;
    height: 26px;
    background-color: #f4f4f4;
    border-radius: 12px;
    display: flex;
    align-items: center;
    padding: 0 8px;
    margin-top: -2px;
}

.h-thumb {
    height: 12px;
    width: 639px;
    margin: 0 28px 0 6px;
    background-color: #6e6e6e;
    border-radius: 6px;
}

/* status bar */
.status {
    flex: 1;
    background-color: #f4f4f4;
    border-top: 1.500px solid #c8c8c8;
    display: flex;
    align-items: center;
    font-size: 15px;
    padding-left: 10px;
}

.st-ready, .st-acc-text {
    margin-top: -2px;
}

.st-acc { margin-left: 27px; }
.st-acc-text { margin-left: 6px; }

.st-right {
    margin-left: auto;
    display: flex;
    align-items: center;
    height: 100%;
}

.view-btn {
    width: 60px;
    height: 100%;
    display: flex;
    align-items: center;
    justify-content: center;
}

.view-btn.on { background-color: #dedede; }

.zoom-minus {
    width: 12px;
    height: 1.500px;
    background-color: #333;
    margin-left: 7px;
}

.zoom-slider {
    width: 147px;
    height: 2px;
    margin-left: 9px;
    background-color: #555;
    position: relative;
}

.z-tick {
    position: absolute;
    left: 74px;
    top: -4px;
    width: 1px;
    height: 10px;
    background-color: #555;
}

.z-thumb {
    position: absolute;
    left: 39px;
    top: -7px;
    width: 8px;
    height: 16px;
    background-color: #5a5a5a;
}

.zoom-plus { margin-left: 8px; margin-right: 10px; }

.zoom-val {
    width: 60px;
    padding-left: 10px;
    font-size: 15px;
}
```
